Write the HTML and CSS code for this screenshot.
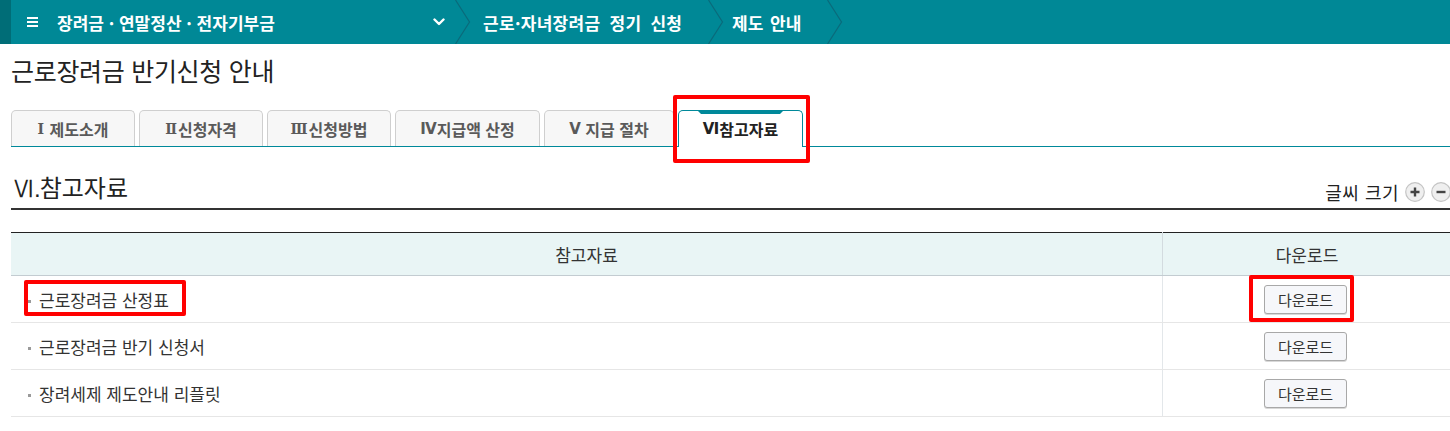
FILE: index.html
```html
<!DOCTYPE html>
<html lang="ko">
<head>
<meta charset="utf-8">
<title>근로장려금 반기신청 안내</title>
<link rel="stylesheet" href="styles.css">
</head>
<body>
<header class="topbar">
  <div class="strip"></div>
  <div class="crumb crumb-home">
    <svg class="menu-icon" width="11" height="10" viewBox="0 0 11 10"><rect x="0" y="0" width="11" height="2" fill="#fff"/><rect x="0" y="4" width="11" height="2" fill="#fff"/><rect x="0" y="8" width="11" height="2" fill="#fff"/></svg>
    <span class="crumb-text">장려금 · 연말정산 · 전자기부금</span>
    <svg class="chev-down" width="12" height="8" viewBox="0 0 12 8"><path d="M1.5 1.5 L6 6 L10.5 1.5" fill="none" stroke="#fff" stroke-width="2.4" stroke-linecap="round" stroke-linejoin="round"/></svg>
  </div>
  <svg class="sep" width="16" height="44" viewBox="0 0 16 44"><path d="M0.5 0 L14.5 22 L0.5 44" fill="none" stroke="#0a6a7b" stroke-width="1.2"/></svg>
  <div class="crumb crumb-2"><span class="crumb-text">근로·자녀장려금 정기 신청</span></div>
  <svg class="sep" width="16" height="44" viewBox="0 0 16 44"><path d="M0.5 0 L14.5 22 L0.5 44" fill="none" stroke="#0a6a7b" stroke-width="1.2"/></svg>
  <div class="crumb crumb-3"><span class="crumb-text">제도 안내</span></div>
  <svg class="sep" width="16" height="44" viewBox="0 0 16 44"><path d="M0.5 0 L14.5 22 L0.5 44" fill="none" stroke="#0a6a7b" stroke-width="1.2"/></svg>
</header>

<main class="page">
  <h1 class="page-title">근로장려금 반기신청 안내</h1>

  <ul class="tabs">
    <li class="tab t1"><span class="rn">Ⅰ</span>&nbsp;제도소개</li>
    <li class="tab t2"><span class="rn">Ⅱ</span>신청자격</li>
    <li class="tab t3"><span class="rn">Ⅲ</span>신청방법</li>
    <li class="tab t4"><span class="rn">Ⅳ</span>지급액 산정</li>
    <li class="tab t5"><span class="rn">Ⅴ</span> 지급 절차</li>
    <li class="tab t6 active"><span class="rn">Ⅵ</span>참고자료</li>
  </ul>

  <div class="section-head">
    <h2 class="section-title"><span class="num">Ⅵ.</span>참고자료</h2>
    <div class="font-size">
      <span class="fs-label">글씨 크기</span>
      <svg class="fs-btn" width="20" height="20" viewBox="0 0 20 20"><circle cx="10" cy="10" r="9.3" fill="#efefef" stroke="#c4c4c4" stroke-width="1.2"/><path d="M10 5.5 V14.5 M5.5 10 H14.5" stroke="#444" stroke-width="2.4"/></svg>
      <svg class="fs-btn" width="20" height="20" viewBox="0 0 20 20"><circle cx="10" cy="10" r="9.3" fill="#efefef" stroke="#c4c4c4" stroke-width="1.2"/><path d="M5.5 10 H14.5" stroke="#444" stroke-width="2.4"/></svg>
    </div>
  </div>

  <table class="ref-table">
    <thead>
      <tr><th class="col-name">참고자료</th><th class="col-dl">다운로드</th></tr>
    </thead>
    <tbody>
      <tr><td class="name"><span class="bullet"></span>근로장려금 산정표</td><td class="dl"><button class="dl-btn">다운로드</button></td></tr>
      <tr><td class="name"><span class="bullet"></span>근로장려금 반기 신청서</td><td class="dl"><button class="dl-btn">다운로드</button></td></tr>
      <tr><td class="name"><span class="bullet"></span>장려세제 제도안내 리플릿</td><td class="dl"><button class="dl-btn">다운로드</button></td></tr>
    </tbody>
  </table>
</main>

<div class="mark mark-tab"></div>
<div class="mark mark-row"></div>
<div class="mark mark-btn"></div>
</body>
</html>
```

FILE: styles.css
```css
html, body {
  margin: 0;
  padding: 0;
}
body {
  position: relative;
  width: 1450px;
  height: 431px;
  overflow: hidden;
  background: #fff;
  font-family: "Noto Sans CJK KR", "Noto Sans", sans-serif;
  color: #222;
}

/* top bar */
.topbar {
  display: flex;
  align-items: stretch;
  height: 44px;
  background: #008896;
}
.strip {
  width: 11px;
  background: #006d77;
}
.crumb {
  display: flex;
  align-items: center;
  color: #fff;
  font-weight: bold;
  font-size: 17px;
  word-spacing: 1px;
}
.crumb-home {
  width: 444px;
  padding-left: 16px;
  box-sizing: border-box;
}
.menu-icon {
  margin-right: 19px;
}
.crumb-home .crumb-text {
  flex: 1;
  word-spacing: 0;
}
.chev-down {
  margin-right: 10px;
}
.crumb-2 {
  width: 237px;
  padding-left: 12px;
  box-sizing: border-box;
  word-spacing: 4px;
  letter-spacing: 0.3px;
}
.crumb-3 {
  width: 103px;
  padding-left: 8px;
  box-sizing: border-box;
  word-spacing: 2px;
}
.sep {
  display: block;
}

/* page */
.page {
  padding-left: 11px;
  width: 1440px;
}
.page-title {
  margin: 0 0 25px;
  padding-top: 11px;
  font-size: 25px;
  line-height: 30px;
  font-weight: normal;
  color: #222;
  letter-spacing: -0.3px;
}

.tabs {
  list-style: none;
  margin: 0;
  padding: 0;
  display: flex;
  gap: 4px;
  height: 36px;
  border-bottom: 1px solid #00899a;
}
.tab {
  box-sizing: border-box;
  height: 36px;
  display: flex;
  align-items: center;
  justify-content: center;
  background: #f7f7f7;
  border: 1px solid #cfcfcf;
  border-bottom: none;
  border-radius: 5px 5px 0 0;
  font-size: 16px;
  font-weight: bold;
  color: #5a5a5a;
  white-space: pre;
}
.tab .rn {
  font-family: "DejaVu Serif", "Liberation Serif", serif;
  font-size: 14px;
  margin-right: 1px;
}
.t4 .rn, .t5 .rn, .t6 .rn {
  font-family: "DejaVu Sans", "Liberation Sans", sans-serif;
  font-size: 15px;
  letter-spacing: -1px;
}
.t1 { width: 124px; }
.t2 { width: 124px; }
.t3 { width: 124px; }
.t4 { width: 145px; }
.t5 { width: 130px; }
.t6 { width: 125px; }
.tab.active {
  position: relative;
  height: 37px;
  background: #fff;
  border-color: #00899a;
  color: #222;
}
.tab.active::before {
  content: "";
  position: absolute;
  top: -1px;
  left: 18px;
  right: 18px;
  height: 4px;
  background: #00899a;
  clip-path: polygon(0 0, 100% 0, calc(100% - 4px) 100%, 4px 100%);
}

/* section head */
.section-head {
  display: flex;
  justify-content: space-between;
  align-items: flex-end;
  margin-top: 25px;
  padding-bottom: 4px;
  border-bottom: 2px solid #333;
}
.section-title {
  margin: 0;
  font-size: 24px;
  line-height: 30px;
  font-weight: normal;
  color: #222;
}
.section-title .num {
  font-family: "Liberation Sans", sans-serif;
  font-weight: normal;
  letter-spacing: -1px;
}
.font-size {
  display: flex;
  align-items: center;
  gap: 6px;
}
.fs-label {
  font-size: 18px;
  line-height: 24px;
  color: #222;
  letter-spacing: 0.5px;
}
.fs-btn {
  display: block;
}

/* table */
.ref-table {
  margin-top: 22px;
  width: 100%;
  border-collapse: collapse;
  border-top: 1px solid #222;
}
.ref-table th {
  height: 42px;
  padding: 0;
  background: #e9f5f5;
  border-bottom: 1px solid #c3ccd1;
  font-weight: normal;
  color: #333;
  font-size: 17px;
}
.col-name {
  width: 1151px;
  border-right: 1px solid #d3dbdf;
}
.ref-table td {
  height: 46px;
  padding: 0;
  border-bottom: 1px solid #e6e6e6;
}
.ref-table td.name {
  border-right: 1px solid #e3e7ea;
  padding-left: 17px;
  color: #333;
  font-size: 17px;
}
.bullet {
  display: inline-block;
  width: 3px;
  height: 3px;
  background: #9a9a9a;
  vertical-align: middle;
  margin-right: 8px;
}
.ref-table td.dl {
  text-align: center;
}
.dl-btn {
  width: 83px;
  height: 29px;
  padding: 0;
  border: 1px solid #a8a8a8;
  border-radius: 3px;
  background: #f6f7fa;
  box-shadow: 0 1px 0 #d8d8d8;
  font-family: inherit;
  font-size: 15px;
  color: #333;
  margin-left: -3px;
}

/* red annotation boxes */
.mark {
  position: absolute;
  border: 4px solid #f00;
  border-radius: 2px;
  box-sizing: border-box;
}
.mark-tab { left: 673px; top: 95px; width: 137px; height: 68px; }
.mark-row { left: 24px; top: 280px; width: 162px; height: 36px; }
.mark-btn { left: 1249px; top: 275px; width: 105px; height: 47px; }
```
